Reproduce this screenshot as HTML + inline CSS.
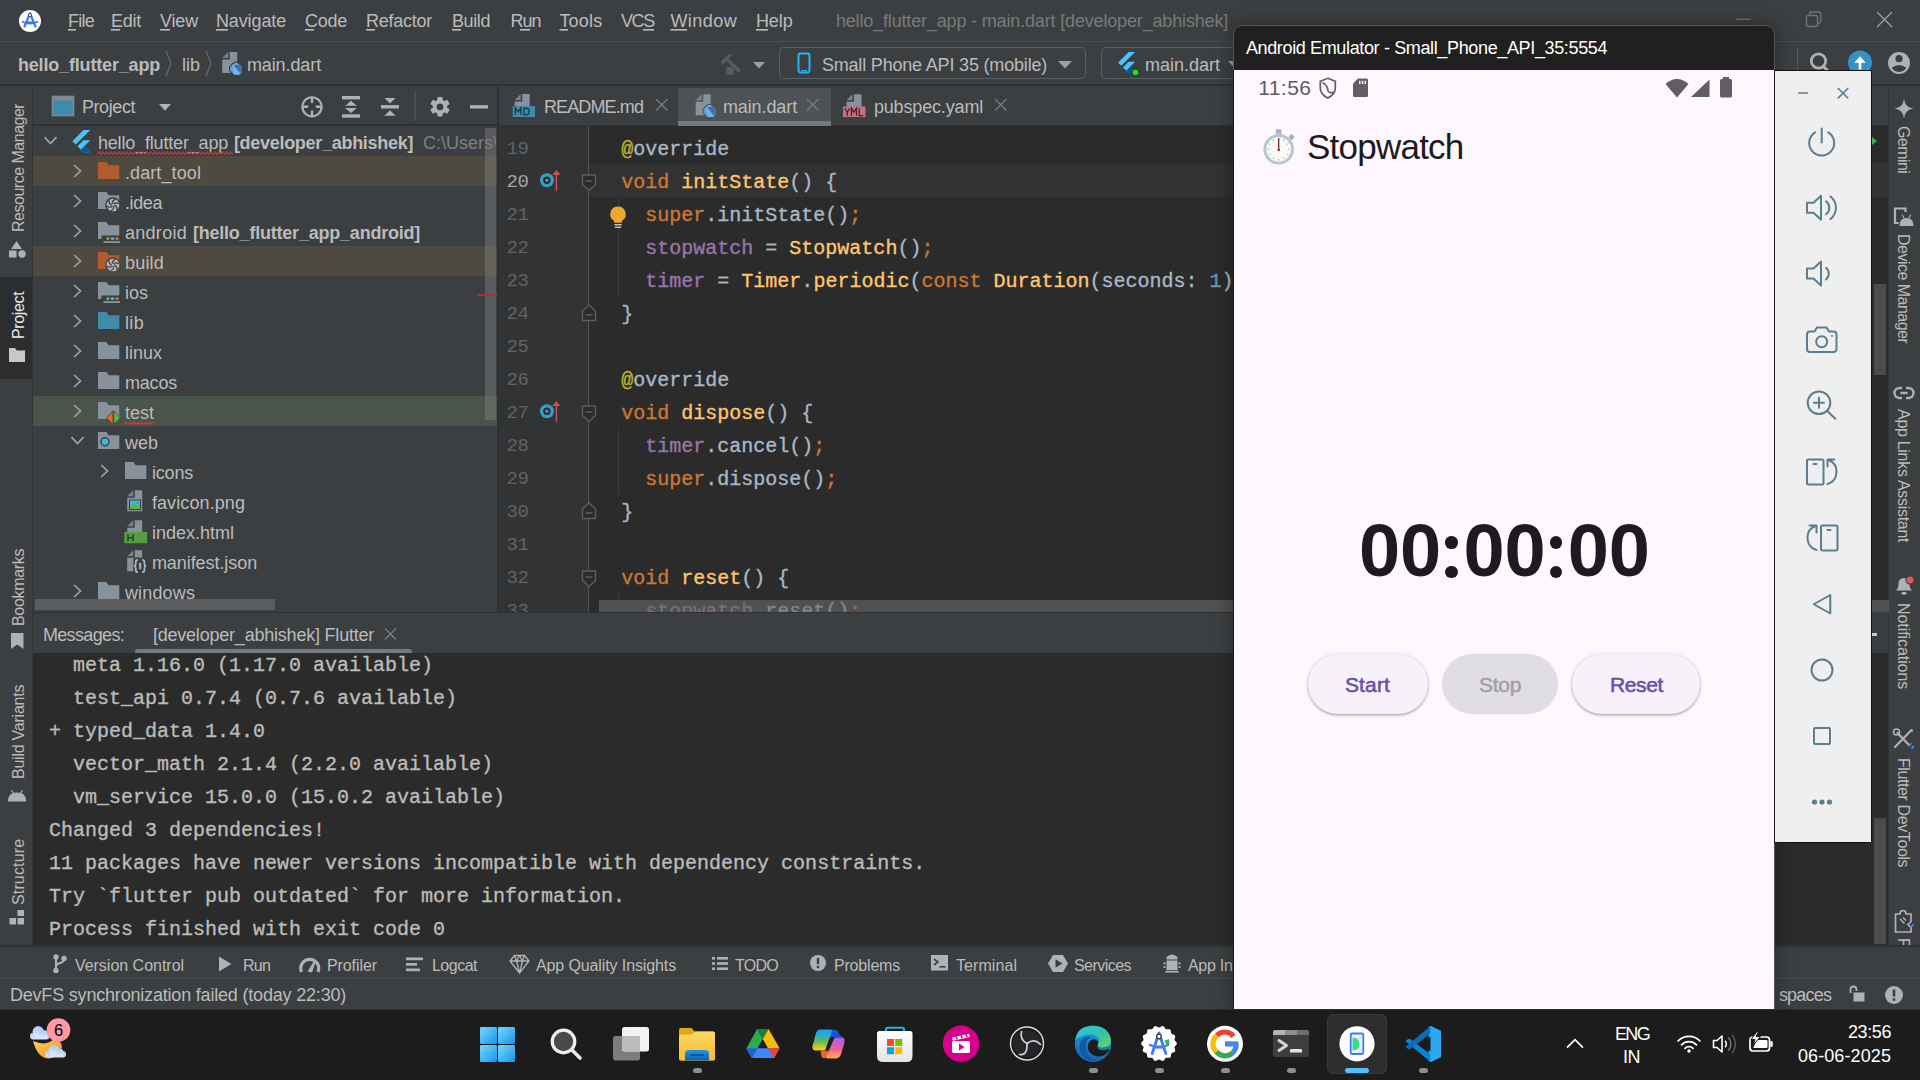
<!DOCTYPE html>
<html><head><meta charset="utf-8"><title>Android Studio</title><style>
html,body{margin:0;padding:0;background:#1c1c1c;}
body{width:1920px;height:1080px;position:relative;overflow:hidden;font-family:"Liberation Sans",sans-serif;}
.r{position:absolute;}
.t{position:absolute;white-space:pre;line-height:1;font-family:"Liberation Sans",sans-serif;}
.m{font-family:"Liberation Mono",monospace;}
.c{position:absolute;white-space:pre;line-height:1;font-family:"Liberation Mono",monospace;font-size:20px;-webkit-text-stroke:0.35px;}
svg{position:absolute;left:0;top:0;overflow:visible;}
</style></head><body>
<div class="r" style="left:0px;top:0px;width:1920px;height:1010px;background:#3c3f41;"></div>
<div class="r" style="left:0px;top:41px;width:1920px;height:1px;background:#4b4e50;"></div>
<div class="r" style="left:0px;top:84px;width:1920px;height:2px;background:#2f3133;"></div>
<div class="r" style="left:32px;top:86px;width:1px;height:859px;background:#323537;"></div>
<div class="r" style="left:0px;top:277px;width:32px;height:102px;background:#2b2d2e;"></div>
<div class="r" style="left:33px;top:124px;width:465px;height:2px;background:#2f3133;"></div>
<div class="r" style="left:33px;top:156px;width:464px;height:30px;background:#4e4a40;"></div>
<div class="r" style="left:33px;top:246px;width:464px;height:30px;background:#4e4a40;"></div>
<div class="r" style="left:33px;top:396px;width:464px;height:30px;background:#4a544a;"></div>
<div class="r" style="left:485px;top:128px;width:11px;height:292px;background:rgba(130,130,130,0.42);"></div>
<div class="r" style="left:477px;top:294px;width:20px;height:2px;background:#a83238;"></div>
<div class="r" style="left:35px;top:599px;width:240px;height:11px;background:#5b5d5f;"></div>
<div class="r" style="left:497px;top:86px;width:2px;height:527px;background:#2f3133;"></div>
<div class="r" style="left:33px;top:612px;width:1200px;height:1px;background:#2f3133;"></div>
<div class="r" style="left:499px;top:126px;width:1390px;height:486px;background:#2b2b2b;"></div>
<div class="r" style="left:499px;top:125px;width:1390px;height:1px;background:#323232;"></div>
<div class="r" style="left:678px;top:88px;width:153px;height:37px;background:#4e5254;"></div>
<div class="r" style="left:678px;top:121px;width:153px;height:5px;background:#747a80;"></div>
<div class="r" style="left:589px;top:164px;width:1299px;height:33px;background:#323232;"></div>
<div class="r" style="left:588px;top:126px;width:1px;height:486px;background:#555555;"></div>
<div class="r" style="left:33px;top:613px;width:1856px;height:40px;background:#3c3f41;"></div>
<div class="r" style="left:135px;top:649px;width:277px;height:5px;background:#747a80;border-radius:3px;"></div>
<div class="r" style="left:33px;top:653px;width:1856px;height:292px;background:#2b2b2b;"></div>
<div class="r" style="left:0px;top:945px;width:1920px;height:2px;background:#323232;"></div>
<div class="r" style="left:0px;top:978px;width:1920px;height:1px;background:#4b4e50;"></div>
<div class="r" style="left:1872px;top:163px;width:16px;height:33px;background:#323232;"></div>
<div class="r" style="left:1874px;top:284px;width:12px;height:91px;background:#4b4b4b;"></div>
<div class="r" style="left:1872px;top:613px;width:16px;height:39px;background:#3a3d3f;"></div>
<div class="r" style="left:1872px;top:633px;width:5px;height:3px;background:#c8c8c8;"></div>
<div class="r" style="left:1874px;top:818px;width:12px;height:126px;background:#4b4b4b;"></div>
<div class="r" style="left:1872px;top:137px;width:0;height:0;border-left:5px solid #3fae57;border-top:4px solid transparent;border-bottom:4px solid transparent"></div>
<div class="r" style="left:499px;top:126px;width:89px;height:486px;background:#313335;"></div>
<div class="r" style="left:1889px;top:86px;width:31px;height:859px;background:#3c3f41;"></div>
<div class="r" style="left:1888px;top:86px;width:1px;height:859px;background:#323537;"></div>
<div class="r" style="left:499px;top:126px;width:1390px;height:486px;overflow:hidden">
<span class="c" style="left:7.4px;top:14.44px;color:#606366;font-size:19px;letter-spacing:-0.3px;-webkit-text-stroke:0">19</span>
<span class="c" style="left:98.3px;top:13.77px"><span style="color:#a9b7c6">  </span><span style="color:#bbb529">@</span><span style="color:#a9b7c6">override</span></span>
<span class="c" style="left:7.4px;top:47.44px;color:#a4a3a3;font-size:19px;letter-spacing:-0.3px;-webkit-text-stroke:0">20</span>
<span class="c" style="left:98.3px;top:46.77px"><span style="color:#a9b7c6">  </span><span style="color:#cc7832">void</span><span style="color:#ffc66d"> initState</span><span style="color:#a9b7c6">() {</span></span>
<span class="c" style="left:7.4px;top:80.44px;color:#606366;font-size:19px;letter-spacing:-0.3px;-webkit-text-stroke:0">21</span>
<span class="c" style="left:98.3px;top:79.77px"><span style="color:#a9b7c6">    </span><span style="color:#cc7832">super</span><span style="color:#a9b7c6">.initState()</span><span style="color:#cc7832">;</span></span>
<span class="c" style="left:7.4px;top:113.44px;color:#606366;font-size:19px;letter-spacing:-0.3px;-webkit-text-stroke:0">22</span>
<span class="c" style="left:98.3px;top:112.77px"><span style="color:#a9b7c6">    </span><span style="color:#9876aa">stopwatch</span><span style="color:#a9b7c6"> = </span><span style="color:#ffc66d">Stopwatch</span><span style="color:#a9b7c6">()</span><span style="color:#cc7832">;</span></span>
<span class="c" style="left:7.4px;top:146.44px;color:#606366;font-size:19px;letter-spacing:-0.3px;-webkit-text-stroke:0">23</span>
<span class="c" style="left:98.3px;top:145.77px"><span style="color:#a9b7c6">    </span><span style="color:#9876aa">timer</span><span style="color:#a9b7c6"> = </span><span style="color:#ffc66d">Timer</span><span style="color:#a9b7c6">.</span><span style="color:#ffc66d">periodic</span><span style="color:#a9b7c6">(</span><span style="color:#cc7832">const</span><span style="color:#ffc66d"> Duration</span><span style="color:#a9b7c6">(seconds: </span><span style="color:#6897bb">1</span><span style="color:#a9b7c6">), (timer) {</span></span>
<span class="c" style="left:7.4px;top:179.44px;color:#606366;font-size:19px;letter-spacing:-0.3px;-webkit-text-stroke:0">24</span>
<span class="c" style="left:98.3px;top:178.77px"><span style="color:#a9b7c6">  </span><span style="color:#a9b7c6">}</span></span>
<span class="c" style="left:7.4px;top:212.44px;color:#606366;font-size:19px;letter-spacing:-0.3px;-webkit-text-stroke:0">25</span>
<span class="c" style="left:7.4px;top:245.44px;color:#606366;font-size:19px;letter-spacing:-0.3px;-webkit-text-stroke:0">26</span>
<span class="c" style="left:98.3px;top:244.77px"><span style="color:#a9b7c6">  </span><span style="color:#bbb529">@</span><span style="color:#a9b7c6">override</span></span>
<span class="c" style="left:7.4px;top:278.44px;color:#606366;font-size:19px;letter-spacing:-0.3px;-webkit-text-stroke:0">27</span>
<span class="c" style="left:98.3px;top:277.77px"><span style="color:#a9b7c6">  </span><span style="color:#cc7832">void</span><span style="color:#ffc66d"> dispose</span><span style="color:#a9b7c6">() {</span></span>
<span class="c" style="left:7.4px;top:311.44px;color:#606366;font-size:19px;letter-spacing:-0.3px;-webkit-text-stroke:0">28</span>
<span class="c" style="left:98.3px;top:310.77px"><span style="color:#a9b7c6">    </span><span style="color:#9876aa">timer</span><span style="color:#a9b7c6">.cancel()</span><span style="color:#cc7832">;</span></span>
<span class="c" style="left:7.4px;top:344.44px;color:#606366;font-size:19px;letter-spacing:-0.3px;-webkit-text-stroke:0">29</span>
<span class="c" style="left:98.3px;top:343.77px"><span style="color:#a9b7c6">    </span><span style="color:#cc7832">super</span><span style="color:#a9b7c6">.dispose()</span><span style="color:#cc7832">;</span></span>
<span class="c" style="left:7.4px;top:377.44px;color:#606366;font-size:19px;letter-spacing:-0.3px;-webkit-text-stroke:0">30</span>
<span class="c" style="left:98.3px;top:376.77px"><span style="color:#a9b7c6">  </span><span style="color:#a9b7c6">}</span></span>
<span class="c" style="left:7.4px;top:410.44px;color:#606366;font-size:19px;letter-spacing:-0.3px;-webkit-text-stroke:0">31</span>
<span class="c" style="left:7.4px;top:443.44px;color:#606366;font-size:19px;letter-spacing:-0.3px;-webkit-text-stroke:0">32</span>
<span class="c" style="left:98.3px;top:442.77px"><span style="color:#a9b7c6">  </span><span style="color:#cc7832">void</span><span style="color:#ffc66d"> reset</span><span style="color:#a9b7c6">() {</span></span>
<span class="c" style="left:7.4px;top:476.44px;color:#606366;font-size:19px;letter-spacing:-0.3px;-webkit-text-stroke:0">33</span>
<span class="c" style="left:98.3px;top:475.77px"><span style="color:#a9b7c6">    </span><span style="color:#9876aa">stopwatch</span><span style="color:#a9b7c6">.reset()</span><span style="color:#cc7832">;</span></span>
<div class="r" style="left:119px;top:71px;width:1px;height:99px;background:#3b3b3b;"></div>
<div class="r" style="left:119px;top:302px;width:1px;height:66px;background:#3b3b3b;"></div>
<div class="r" style="left:119px;top:467px;width:1px;height:20px;background:#3b3b3b;"></div>
<div class="r" style="left:100px;top:474px;width:1290px;height:12px;background:rgba(104,104,104,0.62);"></div>
</div>
<div class="r" style="left:33px;top:653px;width:1856px;height:292px;overflow:hidden">
<span class="c" style="left:16px;top:3.47px;color:#bbbbbb">  meta 1.16.0 (1.17.0 available)</span>
<span class="c" style="left:16px;top:36.47px;color:#bbbbbb">  test_api 0.7.4 (0.7.6 available)</span>
<span class="c" style="left:16px;top:69.47px;color:#bbbbbb">+ typed_data 1.4.0</span>
<span class="c" style="left:16px;top:102.47px;color:#bbbbbb">  vector_math 2.1.4 (2.2.0 available)</span>
<span class="c" style="left:16px;top:135.47px;color:#bbbbbb">  vm_service 15.0.0 (15.0.2 available)</span>
<span class="c" style="left:16px;top:168.47px;color:#bbbbbb">Changed 3 dependencies!</span>
<span class="c" style="left:16px;top:201.47px;color:#bbbbbb">11 packages have newer versions incompatible with dependency constraints.</span>
<span class="c" style="left:16px;top:234.47px;color:#bbbbbb">Try `flutter pub outdated` for more information.</span>
<span class="c" style="left:16px;top:267.47px;color:#bbbbbb">Process finished with exit code 0</span>
</div>
<span class="t" style="font-size:18px;color:#bbbbbb;letter-spacing:-0.704px;left:67.9px;top:11.76px;">File</span>
<span class="t" style="font-size:18px;color:#bbbbbb;letter-spacing:-0.208px;left:110.9px;top:11.76px;">Edit</span>
<span class="t" style="font-size:18px;color:#bbbbbb;letter-spacing:-0.126px;left:159.9px;top:11.76px;">View</span>
<span class="t" style="font-size:18px;color:#bbbbbb;letter-spacing:-0.106px;left:215.9px;top:11.76px;">Navigate</span>
<span class="t" style="font-size:18px;color:#bbbbbb;letter-spacing:-0.208px;left:304.9px;top:11.76px;">Code</span>
<span class="t" style="font-size:18px;color:#bbbbbb;letter-spacing:-0.229px;left:365.9px;top:11.76px;">Refactor</span>
<span class="t" style="font-size:18px;color:#bbbbbb;letter-spacing:-0.366px;left:451.9px;top:11.76px;">Build</span>
<span class="t" style="font-size:18px;color:#bbbbbb;letter-spacing:-0.944px;left:510.4px;top:11.76px;">Run</span>
<span class="t" style="font-size:18px;color:#bbbbbb;letter-spacing:0.234px;left:559.4px;top:11.76px;">Tools</span>
<span class="t" style="font-size:18px;color:#bbbbbb;letter-spacing:-1.272px;left:620.9px;top:11.76px;">VCS</span>
<span class="t" style="font-size:18px;color:#bbbbbb;letter-spacing:0.445px;left:670.4px;top:11.76px;">Window</span>
<span class="t" style="font-size:18px;color:#bbbbbb;letter-spacing:-0.083px;left:755.9px;top:11.76px;">Help</span>
<span class="t" style="font-size:18px;color:#787a7c;letter-spacing:-0.161px;left:835.9px;top:11.76px;">hello_flutter_app - main.dart [developer_abhishek]</span>
<span class="t" style="font-size:18px;color:#bbbbbb;font-weight:bold;letter-spacing:-0.167px;left:17.9px;top:55.76px;">hello_flutter_app</span>
<span class="t" style="font-size:18px;color:#bbbbbb;letter-spacing:0.061px;left:181.9px;top:55.76px;">lib</span>
<span class="t" style="font-size:18px;color:#bbbbbb;letter-spacing:-0.094px;left:246.9px;top:55.76px;">main.dart</span>
<span class="t" style="font-size:18px;color:#bbbbbb;letter-spacing:-0.182px;left:821.9px;top:55.76px;">Small Phone API 35 (mobile)</span>
<span class="t" style="font-size:18px;color:#bbbbbb;letter-spacing:0.017px;left:1144.9px;top:55.76px;">main.dart</span>
<span class="t" style="font-size:18px;color:#bbbbbb;letter-spacing:-0.404px;left:81.9px;top:97.76px;">Project</span>
<span class="t" style="font-size:18px;color:#bbbbbb;letter-spacing:-0.868px;left:543.9px;top:97.76px;">README.md</span>
<span class="t" style="font-size:18px;color:#bbbbbb;letter-spacing:-0.094px;left:722.9px;top:97.76px;">main.dart</span>
<span class="t" style="font-size:18px;color:#bbbbbb;letter-spacing:-0.155px;left:873.9px;top:97.76px;">pubspec.yaml</span>
<span class="t" style="font-size:18px;color:#bbbbbb;letter-spacing:-0.171px;left:97.9px;top:133.76px;">hello_flutter_app</span>
<span class="t" style="font-size:18px;color:#bbbbbb;letter-spacing:0.114px;left:124.9px;top:163.76px;">.dart_tool</span>
<span class="t" style="font-size:18px;color:#bbbbbb;letter-spacing:-0.369px;left:124.9px;top:193.76px;">.idea</span>
<span class="t" style="font-size:18px;color:#bbbbbb;letter-spacing:0.308px;left:124.9px;top:223.76px;">android</span>
<span class="t" style="font-size:18px;color:#bbbbbb;letter-spacing:0.234px;left:124.9px;top:253.76px;">build</span>
<span class="t" style="font-size:18px;color:#bbbbbb;letter-spacing:0.061px;left:124.9px;top:283.76px;">ios</span>
<span class="t" style="font-size:18px;color:#bbbbbb;letter-spacing:0.395px;left:124.9px;top:313.76px;">lib</span>
<span class="t" style="font-size:18px;color:#bbbbbb;letter-spacing:0.034px;left:124.9px;top:343.76px;">linux</span>
<span class="t" style="font-size:18px;color:#bbbbbb;letter-spacing:-0.163px;left:124.9px;top:373.76px;">macos</span>
<span class="t" style="font-size:18px;color:#bbbbbb;letter-spacing:0.046px;left:124.9px;top:403.76px;">test</span>
<span class="t" style="font-size:18px;color:#bbbbbb;letter-spacing:0.056px;left:124.9px;top:433.76px;">web</span>
<span class="t" style="font-size:18px;color:#bbbbbb;letter-spacing:-0.166px;left:151.9px;top:463.76px;">icons</span>
<span class="t" style="font-size:18px;color:#bbbbbb;letter-spacing:0.102px;left:151.9px;top:493.76px;">favicon.png</span>
<span class="t" style="font-size:18px;color:#bbbbbb;letter-spacing:0.015px;left:151.9px;top:523.76px;">index.html</span>
<span class="t" style="font-size:18px;color:#bbbbbb;letter-spacing:-0.066px;left:151.9px;top:553.76px;">manifest.json</span>
<div class="r" style="left:33px;top:576px;width:464px;height:23px;overflow:hidden"><span class="t" style="font-size:18px;color:#bbbbbb;letter-spacing:0.167px;left:91.9px;top:7.76px;">windows</span></div>
<span class="t" style="font-size:18px;color:#bbbbbb;font-weight:bold;letter-spacing:-0.293px;left:233.9px;top:133.76px;">[developer_abhishek]</span>
<div class="r" style="left:420px;top:128px;width:76px;height:28px;overflow:hidden"><span class="t" style="font-size:18px;color:#7d8082;left:3px;top:5.76px;">C:\Users\abhi</span></div>
<span class="t" style="font-size:18px;color:#bbbbbb;font-weight:bold;letter-spacing:-0.215px;left:192.9px;top:223.76px;">[hello_flutter_app_android]</span>
<span class="t" style="font-size:18px;color:#bbbbbb;letter-spacing:-0.65px;left:42.9px;top:625.76px;">Messages:</span>
<span class="t" style="font-size:18px;color:#bbbbbb;letter-spacing:-0.212px;left:152.9px;top:625.76px;">[developer_abhishek] Flutter</span>
<span class="t" style="font-size:16px;color:#bbbbbb;letter-spacing:-0.013px;left:74.9px;top:957.76px;">Version Control</span>
<span class="t" style="font-size:16px;color:#bbbbbb;letter-spacing:-0.72px;left:242.9px;top:957.76px;">Run</span>
<span class="t" style="font-size:16px;color:#bbbbbb;letter-spacing:-0.061px;left:326.9px;top:957.76px;">Profiler</span>
<span class="t" style="font-size:16px;color:#bbbbbb;letter-spacing:-0.474px;left:431.9px;top:957.76px;">Logcat</span>
<span class="t" style="font-size:16px;color:#bbbbbb;letter-spacing:-0.105px;left:535.9px;top:957.76px;">App Quality Insights</span>
<span class="t" style="font-size:16px;color:#bbbbbb;letter-spacing:-0.684px;left:734.9px;top:957.76px;">TODO</span>
<span class="t" style="font-size:16px;color:#bbbbbb;letter-spacing:-0.172px;left:833.9px;top:957.76px;">Problems</span>
<span class="t" style="font-size:16px;color:#bbbbbb;letter-spacing:0.091px;left:955.9px;top:957.76px;">Terminal</span>
<span class="t" style="font-size:16px;color:#bbbbbb;letter-spacing:-0.52px;left:1073.9px;top:957.76px;">Services</span>
<span class="t" style="font-size:16px;color:#bbbbbb;letter-spacing:-0.261px;left:1187.9px;top:957.76px;">App Inspection</span>
<span class="t" style="font-size:18px;color:#bbbbbb;letter-spacing:-0.19px;left:9.9px;top:985.76px;">DevFS synchronization failed (today 22:30)</span>
<span class="t" style="font-size:18px;color:#bbbbbb;letter-spacing:-0.808px;left:1778.9px;top:985.76px;">spaces</span>
<span class="t" style="font-size:16px;color:#bbbbbb;letter-spacing:-0.492px;left:11.46px;top:232.1px;transform-origin:0 0;transform:rotate(-90deg);">Resource Manager</span>
<span class="t" style="font-size:16px;color:#e8e8e8;letter-spacing:-0.371px;left:11.46px;top:339.1px;transform-origin:0 0;transform:rotate(-90deg);">Project</span>
<span class="t" style="font-size:16px;color:#bbbbbb;letter-spacing:-0.315px;left:11.46px;top:626.1px;transform-origin:0 0;transform:rotate(-90deg);">Bookmarks</span>
<span class="t" style="font-size:16px;color:#bbbbbb;letter-spacing:-0.238px;left:11.46px;top:779.1px;transform-origin:0 0;transform:rotate(-90deg);">Build Variants</span>
<span class="t" style="font-size:16px;color:#bbbbbb;letter-spacing:0.142px;left:11.46px;top:905.1px;transform-origin:0 0;transform:rotate(-90deg);">Structure</span>
<span class="t" style="font-size:16px;color:#bbbbbb;letter-spacing:-0.581px;left:1910.54px;top:125.9px;transform-origin:0 0;transform:rotate(90deg);">Gemini</span>
<span class="t" style="font-size:16px;color:#bbbbbb;letter-spacing:-0.521px;left:1910.54px;top:233.9px;transform-origin:0 0;transform:rotate(90deg);">Device Manager</span>
<span class="t" style="font-size:16px;color:#bbbbbb;letter-spacing:-0.292px;left:1910.54px;top:408.9px;transform-origin:0 0;transform:rotate(90deg);">App Links Assistant</span>
<span class="t" style="font-size:16px;color:#bbbbbb;letter-spacing:-0.074px;left:1910.54px;top:602.9px;transform-origin:0 0;transform:rotate(90deg);">Notifications</span>
<span class="t" style="font-size:16px;color:#bbbbbb;letter-spacing:-0.4px;left:1910.54px;top:757.9px;transform-origin:0 0;transform:rotate(90deg);">Flutter DevTools</span>
<div class="r" style="left:1889px;top:930px;width:31px;height:15px;overflow:hidden"><span class="t" style="font-size:16px;color:#bbbbbb;left:21.54px;top:8px;transform-origin:0 0;transform:rotate(90deg);">Flutter Outline</span></div>
<svg width="1920" height="1080" viewBox="0 0 1920 1080"><circle cx="30" cy="21" r="11" fill="#ffffff"/>
<path d="M30 13.5l-5.5 13M30 13.5l5.5 13M26 22.5h8" stroke="#3b78e7" stroke-width="2.2" fill="none" stroke-linecap="round"/><circle cx="30" cy="15" r="1.6" fill="#fff" stroke="#244a8a" stroke-width="1"/><path d="M22 21.5q8 4.5 16 0" stroke="#3b78e7" stroke-width="1.6" fill="none"/>
<rect x="68" y="29" width="8" height="1.6" fill="#bbbbbb"/>
<rect x="111" y="29" width="9" height="1.6" fill="#bbbbbb"/>
<rect x="160" y="29" width="10" height="1.6" fill="#bbbbbb"/>
<rect x="216" y="29" width="12" height="1.6" fill="#bbbbbb"/>
<rect x="305" y="29" width="9" height="1.6" fill="#bbbbbb"/>
<rect x="366" y="29" width="9" height="1.6" fill="#bbbbbb"/>
<rect x="452" y="29" width="9" height="1.6" fill="#bbbbbb"/>
<rect x="520" y="29" width="10" height="1.6" fill="#bbbbbb"/>
<rect x="559.5" y="29" width="8.5" height="1.6" fill="#bbbbbb"/>
<rect x="643" y="29" width="11" height="1.6" fill="#bbbbbb"/>
<rect x="670.5" y="29" width="16.5" height="1.6" fill="#bbbbbb"/>
<rect x="756" y="29" width="12" height="1.6" fill="#bbbbbb"/>
<path d="M166 51l5 12.5l-5 12.5" stroke="#6a6d6f" stroke-width="1.2" fill="none"/>
<path d="M206 51l5 12.5l-5 12.5" stroke="#6a6d6f" stroke-width="1.2" fill="none"/>
<g transform="translate(217.7 50.6) scale(1.5)"><path d="M8 1v5H3v9h10V1z" fill="#87929a"/><path d="M7 1L3 5h4z" fill="#87929a" opacity="0.8"/></g><polygon points="236.50,62.60 242.00,66.80 242.00,72.60 239.60,74.80 234.20,74.80 230.20,70.30 230.20,67.20 233.20,63.90" fill="#3c3f41" stroke="#3c3f41" stroke-width="2.400" stroke-linejoin="round"/><polygon points="236.50,62.60 242.00,66.80 242.00,72.60 239.60,74.80 234.20,74.80 230.20,70.30 230.20,67.20 233.20,63.90" fill="#6fb4f0"/><polygon points="233.30,64.80 239.20,64.80 242.00,67.00 242.00,72.60 240.50,73.70" fill="#4a6fa8"/><polygon points="230.20,67.20 232.00,65.30 234.50,74.80 234.20,74.80 230.20,70.30" fill="#5a8fd0" opacity="0.600"/>
<g fill="#5a5a5a"><rect x="726.300" y="67.200" width="7.700" height="7.600"/><path d="M720.300 62L728.300 54L733 54L729 58.500L741.300 70L738.300 73.300L726.700 61.200L723 64.800Z" stroke="#3c3f41" stroke-width="0.800"/></g>
<path d="M753 62h12l-6 6.5z" fill="#9da0a2"/>
<rect x="779.5" y="47.5" width="306" height="31" rx="4.5" fill="none" stroke="#5c5f61"/>
<rect x="798.5" y="53.5" width="11" height="19" rx="2.2" fill="none" stroke="#1eb4f5" stroke-width="2"/><rect x="801.5" y="70" width="5.5" height="1.3" fill="#1eb4f5"/>
<path d="M1058 61h14l-7 7.5z" fill="#9da0a2"/>
<rect x="1101.5" y="47.5" width="170" height="31" rx="4.5" fill="none" stroke="#5c5f61"/>
<path d="M1228 61h14l-7 7.500z" fill="#9da0a2"/>
<g transform="translate(1118 52) scale(0.95)"><path d="M11.2 0L0 11.2l3.4 3.4L18 0z" fill="#47c5fb"/><path d="M11.2 10.3L5.2 16.3l6 5.9H18l-6-5.9l6-6z" fill="#47c5fb"/><path d="M8.6 19.7l2.6 2.5H18l-6-5.9z" fill="#00569e"/></g>
<circle cx="1135.500" cy="72.300" r="3.800" fill="#2f3133"/><circle cx="1135.500" cy="72.300" r="2.900" fill="#1fe01f"/>
<rect x="1736" y="18.5" width="15" height="1.4" fill="#6d7072"/>
<rect x="1806.5" y="15.5" width="11" height="11" rx="2" fill="none" stroke="#74777a" stroke-width="1.3"/><path d="M1809.5 15v-1.2q0-1.8 1.8-1.8h7.2q2.2 0 2.2 2.2v7.2q0 1.8-1.8 1.8h-1" fill="none" stroke="#74777a" stroke-width="1.3"/>
<path d="M1877 12l15 15M1892 12l-15 15" stroke="#9c9ea0" stroke-width="1.250"/>
<rect x="1797" y="48" width="1" height="23" fill="#55585a"/>
<circle cx="1818.5" cy="61" r="7.2" fill="none" stroke="#afb1b3" stroke-width="2.8"/><path d="M1823.5 66.5l5.5 5.5" stroke="#afb1b3" stroke-width="3"/>
<circle cx="1860" cy="62.500" r="12" fill="#3592c4"/><path d="M1854.300 62.700l5.700-6.400l5.700 6.400z" fill="#fff"/><rect x="1858.700" y="62" width="2.600" height="7.500" fill="#fff"/>
<circle cx="1899" cy="63" r="11" fill="#afb1b3"/><circle cx="1899" cy="58.700" r="3.600" fill="#3c3f41"/><path d="M1891.800 67.700q7.200-5.600 14.400 0q-1.200 3.400-7.200 4.200q-6-0.800-7.200-4.200z" fill="#3c3f41"/>
<rect x="52.5" y="96.5" width="21" height="19" fill="#3e8bab" stroke="#7e8a91" stroke-width="1.6"/><rect x="52" y="96" width="22" height="4.5" fill="#7e8a91"/>
<path d="M159 104h12l-6 6.8z" fill="#afb1b3"/>
<circle cx="312" cy="106.8" r="9.6" fill="none" stroke="#afb1b3" stroke-width="2.1"/><path d="M312 97v6M312 110.600v6M302.200 106.800h6M315.800 106.800h6" stroke="#afb1b3" stroke-width="2.4"/>
<g fill="#afb1b3"><rect x="342" y="96" width="18" height="3.4"/><rect x="342" y="114.3" width="18" height="3.4"/><path d="M351 100.800l5.800 5h-11.600z"/><path d="M351 113l5.800-5h-11.600z"/></g>
<g fill="#afb1b3"><rect x="381" y="105.100" width="18" height="3.400"/><path d="M390 103.400l5.600-5.400h-11.200z"/><path d="M390 110.300l5.600 5.400h-11.200z"/></g>
<rect x="414.5" y="91" width="1.2" height="30" fill="#55585a"/>
<g transform="translate(440 106.8)" fill="#afb1b3"><rect x="-2.6" y="-9.8" width="5.2" height="5" rx="0.8" transform="rotate(0)"/><rect x="-2.6" y="-9.8" width="5.2" height="5" rx="0.8" transform="rotate(60)"/><rect x="-2.6" y="-9.8" width="5.2" height="5" rx="0.8" transform="rotate(120)"/><rect x="-2.6" y="-9.8" width="5.2" height="5" rx="0.8" transform="rotate(180)"/><rect x="-2.6" y="-9.8" width="5.2" height="5" rx="0.8" transform="rotate(240)"/><rect x="-2.6" y="-9.8" width="5.2" height="5" rx="0.8" transform="rotate(300)"/><circle r="7.2"/></g><circle cx="440" cy="106.800" r="3.400" fill="#3c3f41"/>
<rect x="470" y="105.200" width="18" height="3.300" fill="#afb1b3"/>
<path d="M44.5 137.1l6 6.4l6-6.4" fill="none" stroke="#a0a2a4" stroke-width="1.7"/>
<g transform="translate(72.3 130) scale(1.0)"><path d="M11.2 0L0 11.2l3.4 3.4L18 0z" fill="#47c5fb"/><path d="M11.2 10.3L5.2 16.3l6 5.9H18l-6-5.9l6-6z" fill="#47c5fb"/><path d="M8.6 19.7l2.6 2.5H18l-6-5.9z" fill="#00569e"/></g>
<path d="M97 154.3L99 151.9L101 154.3L103 151.9L105 154.3L107 151.9L109 154.3L111 151.9L113 154.3L115 151.9L117 154.3L119 151.9L121 154.3L123 151.9L125 154.3L127 151.9L129 154.3L131 151.9L133 154.3L135 151.9L137 154.3L139 151.9L141 154.3L143 151.9L145 154.3L147 151.9L149 154.3L151 151.9L153 154.3L155 151.9L157 154.3L159 151.9L161 154.3L163 151.9L165 154.3L167 151.9L169 154.3L171 151.9L173 154.3L175 151.9L177 154.3L179 151.9L181 154.3L183 151.9L185 154.3L187 151.9L189 154.3L191 151.9L193 154.3L195 151.9L197 154.3L199 151.9L201 154.3L203 151.9L205 154.3L207 151.9L209 154.3L211 151.9L213 154.3L215 151.9L217 154.3L219 151.9L221 154.3L223 151.9L225 154.3L227 151.9L229 154.3L231 151.9L233 154.3" fill="none" stroke="#bc3f3c" stroke-width="1.3"/>
<path d="M74.1 165l6.4 6l-6.4 6" fill="none" stroke="#a0a2a4" stroke-width="1.7"/>
<path d="M74.1 195l6.4 6l-6.4 6" fill="none" stroke="#a0a2a4" stroke-width="1.7"/>
<path d="M74.1 225l6.4 6l-6.4 6" fill="none" stroke="#a0a2a4" stroke-width="1.7"/>
<path d="M74.1 255l6.4 6l-6.4 6" fill="none" stroke="#a0a2a4" stroke-width="1.7"/>
<path d="M74.1 285l6.4 6l-6.4 6" fill="none" stroke="#a0a2a4" stroke-width="1.7"/>
<path d="M74.1 315l6.4 6l-6.4 6" fill="none" stroke="#a0a2a4" stroke-width="1.7"/>
<path d="M74.1 345l6.4 6l-6.4 6" fill="none" stroke="#a0a2a4" stroke-width="1.7"/>
<path d="M74.1 375l6.4 6l-6.4 6" fill="none" stroke="#a0a2a4" stroke-width="1.7"/>
<path d="M74.1 405l6.4 6l-6.4 6" fill="none" stroke="#a0a2a4" stroke-width="1.7"/>
<path d="M74.1 585l6.4 6l-6.4 6" fill="none" stroke="#a0a2a4" stroke-width="1.7"/>
<path d="M71.5 437.1l6 6.4l6-6.4" fill="none" stroke="#a0a2a4" stroke-width="1.7"/>
<path d="M101.1 465l6.4 6l-6.4 6" fill="none" stroke="#a0a2a4" stroke-width="1.7"/>
<g transform="translate(96.5 159) scale(1.5)"><path d="M1 2h5.6l1.5 2.2H15.2V13.4H1z" fill="#b05c2c"/></g>
<g transform="translate(96.5 189) scale(1.5)"><path d="M1 2h5.6l1.5 2.2H15.2V13.4H1z" fill="#87929a"/></g>
<circle cx="113" cy="205" r="7.8" fill="#3c3f41"/><circle cx="113" cy="205" r="6.3" fill="#b4b7b9"/><path d="M114.20 205.00Q117.15 205.63 116.98 210.01" stroke="#3c3f41" stroke-width="1.3" fill="none"/><path d="M113.60 206.04Q114.53 208.91 110.65 210.95" stroke="#3c3f41" stroke-width="1.3" fill="none"/><path d="M112.40 206.04Q110.38 208.28 106.67 205.94" stroke="#3c3f41" stroke-width="1.3" fill="none"/><path d="M111.80 205.00Q108.85 204.37 109.02 199.99" stroke="#3c3f41" stroke-width="1.3" fill="none"/><path d="M112.40 203.96Q111.47 201.09 115.35 199.05" stroke="#3c3f41" stroke-width="1.3" fill="none"/><path d="M113.60 203.96Q115.62 201.72 119.33 204.06" stroke="#3c3f41" stroke-width="1.3" fill="none"/>
<g transform="translate(96.5 219) scale(1.5)"><path d="M1 2h5.6l1.5 2.2H15.2V13.4H1z" fill="#87929a"/></g><rect x="101.500" y="235.5" width="20" height="8" fill="#3c3f41"/><circle cx="108" cy="238.6" r="1.7" fill="#62b543"/><circle cx="112.500" cy="238.6" r="1.7" fill="#40b6e0"/><circle cx="117" cy="238.6" r="1.7" fill="#f26522"/><rect x="103.500" y="241.3" width="16.500" height="1.500" fill="#9aa7b0"/>
<g transform="translate(96.5 249) scale(1.5)"><path d="M1 2h5.6l1.5 2.2H15.2V13.4H1z" fill="#b05c2c"/></g>
<circle cx="113" cy="265" r="7.8" fill="#4e4a40"/><circle cx="113" cy="265" r="6.3" fill="#b4b7b9"/><path d="M114.20 265.00Q117.15 265.63 116.98 270.01" stroke="#4e4a40" stroke-width="1.3" fill="none"/><path d="M113.60 266.04Q114.53 268.91 110.65 270.95" stroke="#4e4a40" stroke-width="1.3" fill="none"/><path d="M112.40 266.04Q110.38 268.28 106.67 265.94" stroke="#4e4a40" stroke-width="1.3" fill="none"/><path d="M111.80 265.00Q108.85 264.37 109.02 259.99" stroke="#4e4a40" stroke-width="1.3" fill="none"/><path d="M112.40 263.96Q111.47 261.09 115.35 259.05" stroke="#4e4a40" stroke-width="1.3" fill="none"/><path d="M113.60 263.96Q115.62 261.72 119.33 264.06" stroke="#4e4a40" stroke-width="1.3" fill="none"/>
<g transform="translate(96.5 279) scale(1.5)"><path d="M1 2h5.6l1.5 2.2H15.2V13.4H1z" fill="#87929a"/></g><rect x="101.500" y="295.5" width="20" height="8" fill="#3c3f41"/><circle cx="108" cy="298.6" r="1.7" fill="#62b543"/><circle cx="112.500" cy="298.6" r="1.7" fill="#40b6e0"/><circle cx="117" cy="298.6" r="1.7" fill="#f26522"/><rect x="103.500" y="301.3" width="16.500" height="1.500" fill="#9aa7b0"/>
<g transform="translate(96.5 309) scale(1.5)"><path d="M1 2h5.6l1.5 2.2H15.2V13.4H1z" fill="#3e8bab"/></g>
<g transform="translate(96.5 339) scale(1.5)"><path d="M1 2h5.6l1.5 2.2H15.2V13.4H1z" fill="#87929a"/></g>
<g transform="translate(96.5 369) scale(1.5)"><path d="M1 2h5.6l1.5 2.2H15.2V13.4H1z" fill="#87929a"/></g>
<g transform="translate(96.5 399) scale(1.5)"><path d="M1 2h5.6l1.5 2.2H15.2V13.4H1z" fill="#87929a"/></g>
<path d="M113.300 410.3l7.400 7.400l-7.400 7.400l-7.400-7.400z" fill="#4a544a"/><path d="M112.500 412.2v11l-5.500-5.500z" fill="#f26522"/><path d="M114.300 412.2v11l5.500-5.500z" fill="#62b543"/>
<path d="M124 424.5L126 422.1L128 424.5L130 422.1L132 424.5L134 422.1L136 424.5L138 422.1L140 424.5L142 422.1L144 424.5L146 422.1L148 424.5L150 422.1L152 424.5L154 422.1" fill="none" stroke="#bc3f3c" stroke-width="1.3"/>
<g transform="translate(96.5 429) scale(1.5)"><path d="M1 2h5.6l1.5 2.2H15.2V13.4H1z" fill="#87929a"/></g>
<circle cx="105" cy="441.8" r="4.700" fill="#3c3f41"/><circle cx="105" cy="441.8" r="3.300" fill="#40b6e0"/>
<g transform="translate(123.5 459) scale(1.5)"><path d="M1 2h5.6l1.5 2.2H15.2V13.4H1z" fill="#87929a"/></g>
<g transform="translate(122.7 488.7) scale(1.5)"><path d="M8 1v5H3v9h10V1z" fill="#87929a"/><path d="M7 1L3 5h4z" fill="#87929a" opacity="0.8"/></g>
<rect x="129" y="499.5" width="12" height="10.500" fill="#3c3f41"/><rect x="130" y="500.5" width="10" height="8.500" fill="#40b6e0"/><path d="M130 509v-3.200q2.500-2.800 5-1.500q2.500 1.700 5 2.500v2.200z" fill="#62b543"/><circle cx="137.500" cy="502.8" r="0.900" fill="#2f7f9f"/>
<g transform="translate(122.7 518.7) scale(1.5)"><path d="M8 1v5H3v4.199999999999999h10V1z" fill="#87929a"/><path d="M7 1L3 5h4z" fill="#87929a" opacity="0.8"/></g>
<rect x="124.200" y="532" width="23" height="11.200" fill="#579a44"/><path d="M128 534.3v7M133 534.3v7M128 537.8h5" stroke="#254a1c" stroke-width="1.600" fill="none"/>
<g transform="translate(122.7 548.7) scale(1.5)"><path d="M8 1v5H3v9h10V1z" fill="#87929a"/><path d="M7 1L3 5h4z" fill="#87929a" opacity="0.8"/></g>
<path d="M133.500 557.5h9.500v14.500h-9.500z" fill="#3c3f41"/>
<g fill="none" stroke="#3c3f41" stroke-width="4.200"><path d="M138 559.8q-2.200 0-2.200 2v2.300q0 1.700-1.800 1.900q1.800 0.200 1.800 1.900v2.300q0 2 2.200 2"/><path d="M142.200 559.8q2.200 0 2.200 2v2.300q0 1.700 1.800 1.900q-1.800 0.200-1.800 1.900v2.300q0 2-2.200 2"/></g>
<g fill="none" stroke="#aeb9c0" stroke-width="1.700"><path d="M138 559.8q-2.200 0-2.200 2v2.300q0 1.700-1.800 1.900q1.800 0.200 1.800 1.900v2.300q0 2 2.200 2"/><path d="M142.200 559.8q2.200 0 2.200 2v2.300q0 1.700 1.800 1.900q-1.800 0.200-1.800 1.900v2.300q0 2-2.200 2"/><path d="M140.100 562.8v6.400" stroke-width="2.400" stroke="#9aa7b0"/></g>
<g clip-path="url(#cw)"><g transform="translate(96.5 579) scale(1.5)"><path d="M1 2h5.6l1.5 2.2H15.2V13.4H1z" fill="#87929a"/></g></g><clipPath id="cw"><rect x="33" y="570" width="464" height="29"/></clipPath>
<g transform="translate(510.2 92.5) scale(1.5)"><path d="M8 1v5H3v3.5999999999999996h10V1z" fill="#87929a"/><path d="M7 1L3 5h4z" fill="#87929a" opacity="0.8"/></g>
<rect x="512.700" y="106" width="22.300" height="11" fill="#3e8bab"/>
<path d="M515.300 115v-7l2.800 3.800l2.800-3.800v7" fill="none" stroke="#1d3d4a" stroke-width="1.400"/><path d="M524 108.200v6.600h2q3.200 0 3.200-3.300t-3.200-3.300z" fill="none" stroke="#1d3d4a" stroke-width="1.400"/>
<g transform="translate(691.2 92.8) scale(1.5)"><path d="M8 1v5H3v9h10V1z" fill="#87929a"/><path d="M7 1L3 5h4z" fill="#87929a" opacity="0.8"/></g><polygon points="710.00,104.80 715.50,109.00 715.50,114.80 713.10,117.00 707.70,117.00 703.70,112.50 703.70,109.40 706.70,106.10" fill="#4e5254" stroke="#4e5254" stroke-width="2.400" stroke-linejoin="round"/><polygon points="710.00,104.80 715.50,109.00 715.50,114.80 713.10,117.00 707.70,117.00 703.70,112.50 703.70,109.40 706.70,106.10" fill="#6fb4f0"/><polygon points="706.80,107.00 712.70,107.00 715.50,109.20 715.50,114.80 714.00,115.90" fill="#4a6fa8"/><polygon points="703.70,109.40 705.50,107.50 708.00,117.00 707.70,117.00 703.70,112.50" fill="#5a8fd0" opacity="0.600"/>
<g transform="translate(842 92.8) scale(1.5)"><path d="M8 1v5H3v3.5999999999999996h10V1z" fill="#87929a"/><path d="M7 1L3 5h4z" fill="#87929a" opacity="0.8"/></g>
<rect x="843" y="106.500" width="22.500" height="10.500" fill="#c3717c"/>
<path d="M844.800 108.300l2.500 3.700l2.500-3.700M847.300 112v3.700M851.500 115.700v-7.400l2.500 3.800l2.500-3.800v7.400M859.300 108.300v7.400h4" fill="none" stroke="#4a1f27" stroke-width="1.250"/>
<path d="M656 99l11.500 11.500M667.5 99l-11.500 11.500" stroke="#7b7e80" stroke-width="1.300"/>
<path d="M807 99l11.500 11.500M818.5 99l-11.500 11.500" stroke="#7b7e80" stroke-width="1.300"/>
<path d="M995 99l11.500 11.500M1006.5 99l-11.500 11.500" stroke="#7b7e80" stroke-width="1.300"/>
<path d="M385 628.500l11 11M396 628.500l-11 11" stroke="#7b7e80" stroke-width="1.300"/>
<circle cx="546.900" cy="180.3" r="7" fill="#3a9cc4"/><circle cx="546.900" cy="180.3" r="3.700" fill="#2b2b2b"/><circle cx="546.900" cy="180.3" r="1.700" fill="#3a9cc4"/><path d="M556.400 190.8v-18" stroke="#c75450" stroke-width="1.500"/><path d="M552.300 175.10000000000002l4.100-5l4.100 5z" fill="#c75450"/>
<circle cx="546.900" cy="411.3" r="7" fill="#3a9cc4"/><circle cx="546.900" cy="411.3" r="3.700" fill="#2b2b2b"/><circle cx="546.900" cy="411.3" r="1.700" fill="#3a9cc4"/><path d="M556.400 421.8v-18" stroke="#c75450" stroke-width="1.500"/><path d="M552.300 406.1l4.100-5l4.100 5z" fill="#c75450"/>
<path d="M582.500 175.0h13v9.500l-6.500 6l-6.500-6z" fill="#2b2b2b" stroke="#5d5d5d" stroke-width="1.400"/><rect x="585.500" y="180.3" width="7" height="1.500" fill="#5d5d5d"/>
<path d="M582.500 320.5h13v-9.500l-6.500-6l-6.500 6z" fill="#2b2b2b" stroke="#5d5d5d" stroke-width="1.400"/><rect x="585.500" y="314.2" width="7" height="1.500" fill="#5d5d5d"/>
<path d="M582.500 406.0h13v9.500l-6.500 6l-6.500-6z" fill="#2b2b2b" stroke="#5d5d5d" stroke-width="1.400"/><rect x="585.500" y="411.3" width="7" height="1.500" fill="#5d5d5d"/>
<path d="M582.500 518.5h13v-9.500l-6.500-6l-6.500 6z" fill="#2b2b2b" stroke="#5d5d5d" stroke-width="1.400"/><rect x="585.500" y="512.2" width="7" height="1.500" fill="#5d5d5d"/>
<path d="M582.500 571.0h13v9.500l-6.500 6l-6.500-6z" fill="#2b2b2b" stroke="#5d5d5d" stroke-width="1.400"/><rect x="585.500" y="576.3" width="7" height="1.500" fill="#5d5d5d"/>
<path d="M618 206.400a7.700 7.700 0 0 1 4.600 13.900q-0.800 0.900-0.800 2.400h-7.600q0-1.500-0.800-2.400a7.700 7.700 0 0 1 4.600-13.900z" fill="#f0a732"/><rect x="614.300" y="224" width="7.400" height="1.400" fill="#c4c4c4"/><rect x="614.800" y="226.600" width="6.400" height="1.400" fill="#c4c4c4"/>
<g fill="none" stroke="#afb1b3" stroke-width="2.200"><path d="M56 957v12.500M56 967q0-3 4-4q4-1 4-5"/></g><circle cx="56" cy="957" r="2.700" fill="#afb1b3"/><circle cx="56" cy="970.500" r="2.700" fill="#afb1b3"/><circle cx="64" cy="958.500" r="2.700" fill="#afb1b3"/>
<path d="M219 956.500l12.500 7.500l-12.500 7.500z" fill="#afb1b3"/>
<path d="M301.500 972a9 9 0 1 1 16.500 0" fill="none" stroke="#afb1b3" stroke-width="3.200"/><path d="M307.500 971.500l6.500-10.500l1.500 1l-3.500 10.500z" fill="#afb1b3"/>
<g fill="#afb1b3"><rect x="406" y="957.500" width="17" height="2.700"/><rect x="406" y="963" width="11" height="2.700"/><rect x="406" y="968.500" width="14" height="2.700"/></g>
<path d="M514.500 955.500h10l4.500 5.500l-9.500 12l-9.500-12zM510 961h19M514.500 955.500l2 5.500l3 12l3-12l2-5.500M516.500 961l3-5.500l3 5.500" fill="none" stroke="#afb1b3" stroke-width="1.300" stroke-linejoin="round"/>
<g fill="#afb1b3"><rect x="712" y="957" width="3" height="2.600"/><rect x="717" y="957" width="11" height="2.600"/><rect x="712" y="962.200" width="3" height="2.600"/><rect x="717" y="962.200" width="11" height="2.600"/><rect x="712" y="967.400" width="3" height="2.600"/><rect x="717" y="967.400" width="11" height="2.600"/></g>
<circle cx="818" cy="963" r="8" fill="#afb1b3"/><rect x="816.800" y="958" width="2.400" height="6.300" fill="#3c3f41"/><rect x="816.800" y="965.800" width="2.400" height="2.400" fill="#3c3f41"/>
<rect x="931" y="955" width="17" height="15.500" fill="#afb1b3"/><path d="M934 959l4 3l-4 3" stroke="#3c3f41" stroke-width="1.600" fill="none"/><rect x="939.500" y="966" width="6" height="1.600" fill="#3c3f41"/>
<path d="M1053 955h10l5 8.500l-5 8.500h-10l-5-8.500z" fill="#afb1b3"/><path d="M1055.500 959.300l7 4.200l-7 4.200z" fill="#3c3f41"/>
<g fill="#afb1b3"><path d="M1166.500 957q5.500-5 11 0v2.500h-11z"/><rect x="1166.500" y="960.500" width="11" height="9.500"/><rect x="1163.500" y="962.500" width="2" height="1.800"/><rect x="1178.500" y="962.500" width="2" height="1.800"/><rect x="1163.500" y="966.200" width="2" height="1.800"/><rect x="1178.500" y="966.200" width="2" height="1.800"/><rect x="1165.500" y="970.800" width="13" height="1.800"/></g>
<rect x="1853.500" y="992.500" width="11" height="9" fill="#afb1b3"/><path d="M1850.500 993v-3.500q0-3 3-3q3 0 3 3v1.500" fill="none" stroke="#afb1b3" stroke-width="1.800"/>
<circle cx="1894" cy="995" r="9" fill="#afb1b3"/><rect x="1892.700" y="989.500" width="2.600" height="7" fill="#3c3f41"/><rect x="1892.700" y="998.200" width="2.600" height="2.600" fill="#3c3f41"/>
<g fill="#afb1b3"><path d="M16.500 241l5.500 8h-11z"/><rect x="9" y="250.500" width="7.500" height="7"/><circle cx="22" cy="254" r="3.700"/></g>
<path d="M9 348h6l1.800 2.500h8.200v11.500h-16z" fill="#c8c8c8"/>
<path d="M11 633h12.500v16l-6.250-4.500l-6.250 4.500z" fill="#afb1b3"/>
<path d="M8.500 801q0-8 8.500-8q8.500 0 8.500 8zM11.500 790l2.500 4M22.500 790l-2.500 4" fill="#afb1b3" stroke="#afb1b3" stroke-width="1.200"/>
<g fill="#afb1b3"><rect x="17.500" y="910" width="6.500" height="6"/><rect x="9.500" y="918" width="6.500" height="6.500"/><rect x="17.500" y="918" width="6.500" height="6.500"/></g>
<path d="M1904 99q1 8.500 9.500 9.600q-8.500 1-9.500 9.600q-1-8.500-9.500-9.600q8.500-1 9.500-9.600z" fill="#afb1b3"/>
<path d="M1905.500 212v-3.500h-10.500v14.500h3.500" fill="none" stroke="#afb1b3" stroke-width="2.200"/><path d="M1900 225.500q0-7 6.500-7q6.500 0 6.500 7zM1902 214.500l2 3.500M1911 214.500l-2 3.500" fill="#afb1b3" stroke="#afb1b3" stroke-width="1.100"/>
<g fill="none" stroke="#afb1b3" stroke-width="2.400"><path d="M1902 388h-2.500a5 5 0 0 0 0 10h2.500"/><path d="M1906 388h2.500a5 5 0 0 1 0 10h-2.500"/><path d="M1900.500 393h7"/></g>
<path d="M1896 590.500q2.500-2 2.500-6.500q0-6 5.500-6q5.500 0 5.500 6q0 4.500 2.500 6.500z" fill="#afb1b3"/><rect x="1901.500" y="592" width="5" height="2.500" rx="1.200" fill="#afb1b3"/><circle cx="1910" cy="580" r="4.600" fill="#3c3f41"/><circle cx="1910" cy="580" r="3.500" fill="#db5860"/>
<g stroke="#afb1b3" fill="none" stroke-width="2.200" stroke-linecap="round"><path d="M1895 747l15-15.500"/><path d="M1897.500 733l11 11.500"/></g><circle cx="1896.500" cy="732" r="3" fill="none" stroke="#afb1b3" stroke-width="1.600"/><path d="M1908.500 746.500l3-3.200M1911.500 748.800l2.500-2.700" stroke="#4a8ff0" stroke-width="1.600"/><circle cx="1911.500" cy="730.500" r="1.500" fill="#afb1b3"/>
<path d="M1895.500 925.500v-11.500h4.500q0-3.500 3-3.500q3 0 3 3.500h5v7.500l-3 3l3 3v4.500h-15.500z" fill="none" stroke="#afb1b3" stroke-width="1.700"/><path d="M1900 919l4.500 4.500M1903 917.500l3 3" stroke="#afb1b3" stroke-width="1.500"/><path d="M1910.500 927.500l3-3.200" stroke="#4a8ff0" stroke-width="1.600"/></svg>
<div class="r" style="left:1232.6px;top:24.6px;width:542.8px;height:985px;border-radius:9.5px 9.5px 0 0;box-shadow:0 0 16px 3px rgba(0,0,0,0.27);background:#565656"></div>
<div class="r" style="left:1234px;top:26px;width:540px;height:46px;border-radius:8px 8px 0 0;background:#202020"></div>
<span class="t" style="font-size:18px;color:#ffffff;letter-spacing:-0.358px;left:1245.9px;top:38.76px;">Android Emulator - Small_Phone_API_35:5554</span>
<div class="r" style="left:1234px;top:70px;width:540px;height:938.5px;background:#fef7ff;"></div>
<div class="r" style="left:1233px;top:70px;width:1px;height:939px;background:#1a1a1a;"></div>
<div class="r" style="left:1233px;top:1008.5px;width:542px;height:1px;background:#1a1a1a;"></div>
<span class="t" style="font-size:21px;color:#5d5b60;letter-spacing:0.44px;left:1258.2px;top:76.72px;">11:56</span>
<span class="t" style="font-size:35px;color:#1d1b20;letter-spacing:-0.749px;left:1306.9px;top:128.57px;">Stopwatch</span>
<span class="t" style="font-size:74px;color:#1d1b20;font-weight:bold;letter-spacing:-0.056px;left:1358.9px;top:513.96px;">00</span>
<span class="t" style="font-size:74px;color:#1d1b20;font-weight:bold;letter-spacing:-0.056px;left:1463.5px;top:513.96px;">00</span>
<span class="t" style="font-size:74px;color:#1d1b20;font-weight:bold;letter-spacing:-0.056px;left:1567.7px;top:513.96px;">00</span>
<div class="r" style="left:1445.4px;top:536.2px;width:12.6px;height:12.6px;background:#1d1b20;border-radius:50%;"></div>
<div class="r" style="left:1445.4px;top:565.8000000000001px;width:12.6px;height:12.6px;background:#1d1b20;border-radius:50%;"></div>
<div class="r" style="left:1549.5px;top:536.2px;width:12.6px;height:12.6px;background:#1d1b20;border-radius:50%;"></div>
<div class="r" style="left:1549.5px;top:565.8000000000001px;width:12.6px;height:12.6px;background:#1d1b20;border-radius:50%;"></div>
<div class="r" style="left:1308px;top:654px;width:120px;height:60px;background:#f7f2fa;border-radius:30px;box-shadow:0 1px 3px 1px rgba(0,0,0,0.13),0 1px 2px rgba(0,0,0,0.24);"></div>
<div class="r" style="left:1442px;top:654px;width:116px;height:60px;background:#e1dde4;border-radius:30px;"></div>
<div class="r" style="left:1572px;top:654px;width:128px;height:60px;background:#f7f2fa;border-radius:30px;box-shadow:0 1px 3px 1px rgba(0,0,0,0.13),0 1px 2px rgba(0,0,0,0.24);"></div>
<span class="t" style="font-size:21px;color:#6750a4;letter-spacing:0.168px;left:1344.9px;top:674.22px;-webkit-text-stroke:0.55px #6750a4;">Start</span>
<span class="t" style="font-size:21px;color:#a29fa6;letter-spacing:-0.251px;left:1478.9px;top:674.22px;-webkit-text-stroke:0.55px #a29fa6;">Stop</span>
<span class="t" style="font-size:21px;color:#6750a4;letter-spacing:-0.332px;left:1609.9px;top:674.22px;-webkit-text-stroke:0.55px #6750a4;">Reset</span>
<div class="r" style="left:1774px;top:70px;width:98px;height:773px;background:#141414;"></div>
<div class="r" style="left:1775px;top:71px;width:96px;height:771px;background:#efefef;"></div>
<svg width="1920" height="1080" viewBox="0 0 1920 1080"><path d="M1798 93h10" stroke="#5b7e8e" stroke-width="1.500"/>
<path d="M1837.800 88l10.400 10.400M1848.200 88l-10.400 10.400" stroke="#5b7e8e" stroke-width="1.600"/>
<path d="M1815.200 132.300a12.500 12.500 0 1 0 13 0M1821.700 128.500v14" fill="none" stroke="#5b7e8e" stroke-width="2" stroke-linecap="round" stroke-linejoin="round"/>
<path d="M1807 202.8h6.500l7.500-7v24l-7.500-7h-6.500z" fill="none" stroke="#5b7e8e" stroke-width="2" stroke-linecap="round" stroke-linejoin="round"/>
<path d="M1826 201.300a8 8 0 0 1 0 13M1830.500 196.500a14.500 14.500 0 0 1 0 22.600" fill="none" stroke="#5b7e8e" stroke-width="2" stroke-linecap="round" stroke-linejoin="round"/>
<path d="M1807 268.6h6.500l7.500-7v24l-7.500-7h-6.500z" fill="none" stroke="#5b7e8e" stroke-width="2" stroke-linecap="round" stroke-linejoin="round"/>
<path d="M1826 267.800a7.500 7.500 0 0 1 0 11.600" fill="none" stroke="#5b7e8e" stroke-width="2" stroke-linecap="round" stroke-linejoin="round"/>
<path d="M1810 331.500h4.500l2.500-4h9.500l2.500 4h4.500q3 0 3 3v14.500q0 3-3 3h-23.500q-3 0-3-3v-14.500q0-3 3-3z" fill="none" stroke="#5b7e8e" stroke-width="2" stroke-linecap="round" stroke-linejoin="round"/><circle cx="1821.700" cy="341.700" r="5.500" fill="none" stroke="#5b7e8e" stroke-width="2" stroke-linecap="round" stroke-linejoin="round"/><circle cx="1832" cy="336" r="1" fill="#5b7e8e"/>
<circle cx="1819" cy="402.800" r="11.300" fill="none" stroke="#5b7e8e" stroke-width="2" stroke-linecap="round" stroke-linejoin="round"/><path d="M1814 402.800h10M1819 397.800v10M1827.300 411l8 7.800" fill="none" stroke="#5b7e8e" stroke-width="2" stroke-linecap="round" stroke-linejoin="round"/>
<rect x="1807" y="459.500" width="16.500" height="25" rx="1.500" fill="none" stroke="#5b7e8e" stroke-width="2" stroke-linecap="round" stroke-linejoin="round"/><path d="M1813.500 464h3" fill="none" stroke="#5b7e8e" stroke-width="2" stroke-linecap="round" stroke-linejoin="round"/><path d="M1827.500 484q9-2.500 9-12.500q0-8.500-8-11.500M1827.500 466.500v-7h7" fill="none" stroke="#5b7e8e" stroke-width="2" stroke-linecap="round" stroke-linejoin="round"/>
<rect x="1821" y="525.500" width="16.500" height="25" rx="1.500" fill="none" stroke="#5b7e8e" stroke-width="2" stroke-linecap="round" stroke-linejoin="round"/><path d="M1827.500 530h3" fill="none" stroke="#5b7e8e" stroke-width="2" stroke-linecap="round" stroke-linejoin="round"/><path d="M1816.500 550q-9-2.500-9-12.500q0-8.500 8-11.500M1816.500 532.500v-7h-7" fill="none" stroke="#5b7e8e" stroke-width="2" stroke-linecap="round" stroke-linejoin="round"/>
<path d="M1830.300 595v18.500l-16.500-9.250z" fill="none" stroke="#5b7e8e" stroke-width="2" stroke-linecap="round" stroke-linejoin="round"/>
<circle cx="1822" cy="670" r="10.500" fill="none" stroke="#5b7e8e" stroke-width="2" stroke-linecap="round" stroke-linejoin="round"/>
<rect x="1814" y="728" width="16" height="16" rx="1" fill="none" stroke="#5b7e8e" stroke-width="2" stroke-linecap="round" stroke-linejoin="round"/>
<circle cx="1814.500" cy="802" r="2.600" fill="#5b7e8e"/><circle cx="1822" cy="802" r="2.600" fill="#5b7e8e"/><circle cx="1829.500" cy="802" r="2.600" fill="#5b7e8e"/>
<path d="M1327.800 78.300l7.500 3v6.500q0 6.800-7.500 10.200q-7.500-3.400-7.500-10.200v-6.500z" fill="none" stroke="#605e63" stroke-width="1.700"/><path d="M1322.500 82.500q5 3 5.300 7.500q0.300 4 6.700 2" fill="none" stroke="#605e63" stroke-width="1.600"/>
<path d="M1358 78.500h8.500q1.500 0 1.500 1.500v15.500q0 1.500-1.500 1.500h-12q-1.500 0-1.500-1.500v-12z" fill="#605e63"/><rect x="1359" y="80.800" width="1.500" height="3.200" fill="#fef7ff"/><rect x="1361.800" y="80.800" width="1.500" height="3.200" fill="#fef7ff"/><rect x="1364.600" y="80.800" width="1.500" height="3.200" fill="#fef7ff"/>
<path d="M1677 97.500l-11.500-13.500a16 16 0 0 1 23 0z" fill="#605e63"/>
<path d="M1709.500 79.500v17.500h-18.500z" fill="#605e63"/>
<path d="M1720 80.500q0-1.500 1.500-1.500h1.500v-2h6v2h1.500q1.500 0 1.500 1.500v15.500q0 1.500-1.500 1.500h-9q-1.500 0-1.500-1.500z" fill="#605e63"/>
<rect x="1275.800" y="129.200" width="5.600" height="5.500" rx="1" fill="#9fb3bd"/><rect x="1277" y="133" width="3.200" height="3" fill="#b8c7cf"/>
<rect x="-2.300" y="-2" width="4.600" height="4.600" rx="0.800" fill="#9fb3bd" transform="translate(1291.800 136.800) rotate(40)"/>
<circle cx="1278.700" cy="149.300" r="15.300" fill="#b7c6cd"/><circle cx="1278.700" cy="149.300" r="12.400" fill="#f7f8f8"/>
<path d="M1278.7 139.7L1278.7 138.1" stroke="#d98c5f" stroke-width="0.900"/>
<path d="M1283.5 141.0L1284.3 139.6" stroke="#d98c5f" stroke-width="0.900"/>
<path d="M1287.0 144.5L1288.4 143.7" stroke="#d98c5f" stroke-width="0.900"/>
<path d="M1288.3 149.3L1289.9 149.3" stroke="#d98c5f" stroke-width="0.900"/>
<path d="M1287.0 154.1L1288.4 154.9" stroke="#d98c5f" stroke-width="0.900"/>
<path d="M1283.5 157.6L1284.3 159.0" stroke="#d98c5f" stroke-width="0.900"/>
<path d="M1278.7 158.9L1278.7 160.5" stroke="#d98c5f" stroke-width="0.900"/>
<path d="M1273.9 157.6L1273.1 159.0" stroke="#d98c5f" stroke-width="0.900"/>
<path d="M1270.4 154.1L1269.0 154.9" stroke="#d98c5f" stroke-width="0.900"/>
<path d="M1269.1 149.3L1267.5 149.3" stroke="#d98c5f" stroke-width="0.900"/>
<path d="M1270.4 144.5L1269.0 143.7" stroke="#d98c5f" stroke-width="0.900"/>
<path d="M1273.9 141.0L1273.1 139.6" stroke="#d98c5f" stroke-width="0.900"/>
<path d="M1278.700 150.500v-12.300" stroke="#7a2c1e" stroke-width="1.300"/><circle cx="1278.700" cy="150" r="1.200" fill="#7a2c1e"/></svg>
<div class="r" style="left:0px;top:1010px;width:1920px;height:70px;background:#1c1c1c;"></div>
<div class="r" style="left:0px;top:1009px;width:1920px;height:1px;background:#2e2e2e;"></div>
<div class="r" style="left:1327px;top:1014px;width:60px;height:60px;background:#2d2d2d;border-radius:7px;box-shadow:inset 0 0 0 1px #3a3a3a;"></div>
<div class="r" style="left:1345px;top:1068px;width:24px;height:5px;background:#4cc2ff;border-radius:2.5px;"></div>
<div class="r" style="left:692.5px;top:1068px;width:9.5px;height:5px;background:#8e8e8e;border-radius:2.5px;"></div>
<div class="r" style="left:1088.5px;top:1068px;width:9.5px;height:5px;background:#8e8e8e;border-radius:2.5px;"></div>
<div class="r" style="left:1154.5px;top:1068px;width:9.5px;height:5px;background:#8e8e8e;border-radius:2.5px;"></div>
<div class="r" style="left:1220.5px;top:1068px;width:9.5px;height:5px;background:#8e8e8e;border-radius:2.5px;"></div>
<div class="r" style="left:1286.5px;top:1068px;width:9.5px;height:5px;background:#8e8e8e;border-radius:2.5px;"></div>
<div class="r" style="left:1418.5px;top:1068px;width:9.5px;height:5px;background:#8e8e8e;border-radius:2.5px;"></div>
<span class="t" style="font-size:18px;color:#ffffff;letter-spacing:-1.605px;left:1614.9px;top:1024.76px;">ENG</span>
<span class="t" style="font-size:18px;color:#ffffff;letter-spacing:-0.4px;left:1622.9px;top:1047.76px;">IN</span>
<span class="t" style="font-size:18px;color:#ffffff;letter-spacing:-0.369px;left:1847.9px;top:1023.06px;">23:56</span>
<span class="t" style="font-size:18px;color:#ffffff;letter-spacing:0.112px;left:1797.9px;top:1046.76px;">06-06-2025</span>
<svg width="1920" height="1080" viewBox="0 0 1920 1080"><defs>
<linearGradient id="gw" x1="0" y1="0" x2="1" y2="1"><stop offset="0" stop-color="#7ad7ff"/><stop offset="1" stop-color="#1596ea"/></linearGradient>
<linearGradient id="gf" x1="0" y1="0" x2="0" y2="1"><stop offset="0" stop-color="#ffd968"/><stop offset="1" stop-color="#f8bb2a"/></linearGradient>
<linearGradient id="gfb" x1="0" y1="0" x2="0" y2="1"><stop offset="0" stop-color="#2496ea"/><stop offset="1" stop-color="#0b5fb3"/></linearGradient>
<linearGradient id="gs" x1="0" y1="0" x2="0" y2="1"><stop offset="0" stop-color="#ffffff"/><stop offset="1" stop-color="#e4e4e4"/></linearGradient>
<linearGradient id="gc1" x1="0" y1="0" x2="0" y2="1"><stop offset="0" stop-color="#1ea0f5"/><stop offset="0.55" stop-color="#55b86a"/><stop offset="1" stop-color="#f5cc0a"/></linearGradient>
<linearGradient id="gc2" x1="0" y1="0" x2="0" y2="1"><stop offset="0" stop-color="#b85ae8"/><stop offset="0.55" stop-color="#ee5c98"/><stop offset="1" stop-color="#fda650"/></linearGradient>
<linearGradient id="ge1" x1="0" y1="0" x2="1" y2="1"><stop offset="0" stop-color="#2fc0ea"/><stop offset="0.6" stop-color="#36c3a0"/><stop offset="1" stop-color="#6fd94a"/></linearGradient>
<linearGradient id="ge2" x1="0" y1="0" x2="0" y2="1"><stop offset="0" stop-color="#1f9de0"/><stop offset="1" stop-color="#1163b5"/></linearGradient>
<radialGradient id="gsr" cx="0.45" cy="0.4" r="0.6"><stop offset="0" stop-color="#5a5a5a"/><stop offset="1" stop-color="#3a3a3a"/></radialGradient>
<linearGradient id="gm" x1="0" y1="0" x2="1" y2="1"><stop offset="0" stop-color="#ffd75e"/><stop offset="1" stop-color="#f08a1c"/></linearGradient>
<linearGradient id="gcl" x1="0" y1="0" x2="0" y2="1"><stop offset="0" stop-color="#a8c8f8"/><stop offset="1" stop-color="#dfeaf8"/></linearGradient>
</defs>
<path d="M33 1041q14 6 22-3q6 2 7 9q-2 9-12 11.500q-12 1-17-17.500z" fill="url(#gm)"/>
<g fill="url(#gcl)"><rect x="30" y="1032.70" width="19.5" height="6.70" rx="3.35"/><circle cx="38.19" cy="1031.63" r="5.63"/><circle cx="43.65" cy="1034.04" r="4.02"/></g>
<g fill="url(#gcl)"><rect x="45" y="1051.10" width="21" height="6.40" rx="3.20"/><circle cx="53.82" cy="1050.08" r="5.38"/><circle cx="59.70" cy="1052.38" r="3.84"/></g>
<circle cx="58.500" cy="1030" r="11.800" fill="#ff99a4"/>
<rect x="480" y="1027" width="17" height="17" rx="1.200" fill="url(#gw)"/>
<rect x="498" y="1027" width="17" height="17" rx="1.200" fill="url(#gw)"/>
<rect x="480" y="1045" width="17" height="17" rx="1.200" fill="url(#gw)"/>
<rect x="498" y="1045" width="17" height="17" rx="1.200" fill="url(#gw)"/>
<circle cx="563.500" cy="1041.500" r="11.300" fill="#4a4a4a" stroke="#f0f0f0" stroke-width="3.200"/><path d="M572.500 1050.500l7.500 7.500" stroke="#e8e8e8" stroke-width="3.600" stroke-linecap="round"/>
<rect x="613" y="1036" width="27" height="24.500" rx="2.500" fill="#7d7d7d"/><rect x="622" y="1027" width="27" height="24.500" rx="2.500" fill="#f2f2f2"/><path d="M622 1036h18v15.500h-15.500q-2.500 0-2.500-2.500z" fill="#bdbdbd"/>
<path d="M679 1030q0-2 2-2h10.500l3 3.500h18.500q2 0 2 2v25q0 2-2 2h-32q-2 0-2-2z" fill="#e3a511"/><path d="M679 1036.500q0-2 2-2h11l3-3h18q2 0 2 2v25q0 2-2 2h-32q-2 0-2-2z" fill="url(#gf)"/>
<path d="M685 1060.500v-7q0-3.500 3.500-3.500h17q3.500 0 3.500 3.500v7z" fill="url(#gfb)"/><rect x="690" y="1054.300" width="14" height="1.800" rx="0.900" fill="#0a4f98"/>
<path d="M757 1029h11.600l-5.800 10z" fill="#188038"/><path d="M757 1029l5.800 10l-11 19l-5.500-9.600z" fill="#2da94f"/><path d="M768.600 1029l11 19.200h-11.600l-5.200-9.200z" fill="#fbbc04"/><path d="M751.800 1058l5.600-9.800h22.200l-5.500 9.800z" fill="#4285f4"/><path d="M746.300 1048.200h11.100l-5.600 9.800z" fill="#1a66d0"/><path d="M768 1048.200h11.600l-5.500 9.800z" fill="#ea4335"/>
<path d="M831 1030.500h4.500q1.500 0 2.200 2l0.800 2q0.800 2 2.500 2h-13z" fill="#1556d8" stroke="#1556d8" stroke-width="1.500" stroke-linejoin="round"/>
<path d="M821.500 1051.500h6l-2.500 6h-1.200q-1.300-0.300-1.800-2z" fill="#f2602a" stroke="#f2602a" stroke-width="1.500" stroke-linejoin="round"/>
<path d="M819.500 1031h11l-6.500 18h-8.500q-2-0.500-1.500-3l3.500-12.500q0.700-2 2-2.500z" fill="url(#gc1)" stroke="url(#gc1)" stroke-width="3" stroke-linejoin="round"/>
<path d="M835.500 1039h7q1 0.800 0.500 3l-3.500 12q-0.800 2.500-3 3h-9z" fill="url(#gc2)" stroke="url(#gc2)" stroke-width="3" stroke-linejoin="round"/>
<path d="M886 1034v-4.500q0-1.700 1.700-1.700h14.600q1.700 0 1.700 1.700v4.500" fill="none" stroke="#27b3f0" stroke-width="2"/><path d="M877 1033.500q0-2.500 2.500-2.500h30.500q2.500 0 2.500 2.500v22.500q0 6-6 6h-23.500q-6 0-6-6z" fill="url(#gs)"/>
<rect x="887" y="1039" width="7" height="7" fill="#f25022"/><rect x="895.200" y="1039" width="7" height="7" fill="#7fba00"/><rect x="887" y="1047.200" width="7" height="7" fill="#00a4ef"/><rect x="895.200" y="1047.200" width="7" height="7" fill="#ffb900"/>
<circle cx="961" cy="1043.700" r="18.200" fill="#d6008d"/><rect x="952" y="1041" width="18" height="12" rx="1.800" fill="#fff"/><path d="M952 1037.500l17-3.800l0.800 3.300l-17 3.800z" fill="#fff"/><path d="M955.800 1036.200l1.500 3.200M960.800 1035.100l1.500 3.200M965.800 1034l1.500 3.200" stroke="#d6008d" stroke-width="1.500"/><path d="M959 1043.600l5.600 3.400l-5.600 3.400z" fill="#d6008d"/>
<circle cx="1027" cy="1043.500" r="16.500" fill="#1d1b1e" stroke="#dcdcdc" stroke-width="1.400"/><circle cx="1027" cy="1043.500" r="13.800" fill="#262428"/>
<g fill="none" stroke="#cfcfcf" stroke-width="1.700" stroke-linecap="round"><path d="M1021.500 1031.500q-2 8 5.500 12"/><path d="M1040.500 1044.500q-6-6.500-13.500-1"/><path d="M1019.500 1054.500q8 1.500 7.500-11"/></g>
<circle cx="1093" cy="1044" r="18.200" fill="url(#ge2)"/><path d="M1075.300 1040q2-14.200 17.700-14.200q14 0 17.800 12.200q1.500 9-8 9.500q-4.500 0-5.300-2.500q2-2 1.500-5q-1.500-5.500-8.500-5.500q-9 0-15.200 5.500z" fill="url(#ge1)"/><path d="M1086 1045q0-6 6-8q-7-1-11 4q-4 7 1 14q6 7 15 6q-11-3-11-16z" fill="#0f56a3" opacity="0.900"/><path d="M1090 1042q3-4 7-2.500q3.500 1.500 2 5.500q-1 2.500 3.500 3q5 0 8-4q-1 10-10 12q-11 0-10.500-14z" fill="#1c1c1c" opacity="0"/>
<path d="M1097.500 1045q1.500-3-1-5q-3-2-6.500 1q-3 3-2 8q2 6 9 7.500q7 0.500 12-5.500q1-1.500-0.500-2q-3 1.800-7 1.200q-5-1-4-5.200z" fill="#1c1c1c"/>
<polygon points="1176.90,1043.50 1176.58,1044.49 1175.79,1045.39 1174.96,1046.21 1174.50,1047.04 1174.56,1047.98 1174.95,1049.08 1175.27,1050.24 1175.13,1051.27 1174.41,1052.02 1173.31,1052.49 1172.21,1052.87 1171.43,1053.41 1171.07,1054.29 1170.95,1055.45 1170.73,1056.63 1170.16,1057.49 1169.19,1057.86 1167.99,1057.81 1166.83,1057.67 1165.90,1057.83 1165.20,1058.46 1164.58,1059.45 1163.87,1060.42 1162.98,1060.95 1161.95,1060.86 1160.89,1060.29 1159.91,1059.67 1159.00,1059.40 1158.09,1059.67 1157.11,1060.29 1156.05,1060.86 1155.02,1060.95 1154.13,1060.42 1153.42,1059.45 1152.80,1058.46 1152.10,1057.83 1151.17,1057.67 1150.01,1057.81 1148.81,1057.86 1147.84,1057.49 1147.27,1056.63 1147.05,1055.45 1146.93,1054.29 1146.57,1053.41 1145.79,1052.87 1144.69,1052.49 1143.59,1052.02 1142.87,1051.27 1142.73,1050.24 1143.05,1049.08 1143.44,1047.98 1143.50,1047.04 1143.04,1046.21 1142.21,1045.39 1141.42,1044.49 1141.10,1043.50 1141.42,1042.51 1142.21,1041.61 1143.04,1040.79 1143.50,1039.96 1143.44,1039.02 1143.05,1037.92 1142.73,1036.76 1142.87,1035.73 1143.59,1034.98 1144.69,1034.51 1145.79,1034.13 1146.57,1033.59 1146.93,1032.71 1147.05,1031.55 1147.27,1030.37 1147.84,1029.51 1148.81,1029.14 1150.01,1029.19 1151.17,1029.33 1152.10,1029.17 1152.80,1028.54 1153.42,1027.55 1154.13,1026.58 1155.02,1026.05 1156.05,1026.14 1157.11,1026.71 1158.09,1027.33 1159.00,1027.60 1159.91,1027.33 1160.89,1026.71 1161.95,1026.14 1162.98,1026.05 1163.87,1026.58 1164.58,1027.55 1165.20,1028.54 1165.90,1029.17 1166.83,1029.33 1167.99,1029.19 1169.19,1029.14 1170.16,1029.51 1170.73,1030.37 1170.95,1031.55 1171.07,1032.71 1171.43,1033.59 1172.21,1034.13 1173.31,1034.51 1174.41,1034.98 1175.13,1035.73 1175.27,1036.76 1174.95,1037.92 1174.56,1039.02 1174.50,1039.96 1174.96,1040.79 1175.79,1041.61 1176.58,1042.51" fill="#ffffff"/>
<path d="M1159 1033l-6.800 20.500M1159 1033l6.800 20.500M1154 1047h10" stroke="#3f7fee" stroke-width="2.900" fill="none" stroke-linecap="round"/><path d="M1149 1044.500q10 5.500 20 0" stroke="#3f7fee" stroke-width="2.200" fill="none"/><circle cx="1159" cy="1036.500" r="2.300" fill="#fff" stroke="#33373d" stroke-width="1.300"/><path d="M1164.500 1040.500l4.500-1.500l0.500 5l-3 2z" fill="#3fae57"/>
<circle cx="1225" cy="1043.800" r="18" fill="#ffffff"/>
<g fill="none" stroke-width="5.200"><path d="M1233.500 1036.300a11 11 0 0 0-16.800-0.800" stroke="#ea4335"/><path d="M1216.700 1035.500a11 11 0 0 0-0.300 16.200" stroke="#fbbc04"/><path d="M1216.400 1051.700a11 11 0 0 0 16.200 1.200" stroke="#34a853"/><path d="M1232.600 1052.900a11 11 0 0 0 3.400-9.100" stroke="#4285f4"/></g><rect x="1225" y="1041.300" width="13.300" height="5.200" fill="#4285f4"/>
<rect x="1273" y="1030" width="36" height="27" rx="2" fill="#3e3e3e"/><path d="M1273 1035v-3q0-2 2-2h10v5z" fill="#b4b4b4"/><rect x="1285" y="1030" width="12" height="5" fill="#8e8e8e"/><path d="M1297 1030h10q2 0 2 2v3h-12z" fill="#6e6e6e"/><path d="M1279 1040.500l7.500 5l-7.500 5" fill="none" stroke="#d8d8d8" stroke-width="3" stroke-linecap="round" stroke-linejoin="round"/><rect x="1290" y="1049" width="12" height="3.600" rx="0.700" fill="#e4e4e4"/>
<circle cx="1357" cy="1043.800" r="17.600" fill="#ffffff"/><rect x="1350.700" y="1033.500" width="12.600" height="20.500" rx="1.500" fill="#eaf1ff" stroke="#3d7af0" stroke-width="1.800"/><path d="M1352.500 1037.500q7 0 7 6.500q0 6.500-7 6.500z" fill="#3ddc84"/><path d="M1359 1039l1.500-1M1359 1048.800l1.500 1" stroke="#3ddc84" stroke-width="0.800"/>
<path d="M1430.500 1026l10.500 5v26l-10.500 5l-2-1v-34z" fill="#2aa9f2"/><path d="M1430.500 1026l-22 20l-3-2.300q-1.200-1.200 0-2.400l2.300-2q1-0.800 2.200 0l20.500 15.700z" fill="#0a7cc8" opacity="0"/><path d="M1405.500 1041.300l2.500-2.200q1-0.800 2.200 0l20.300 15.400v7.500z" fill="#0b84d6"/><path d="M1405.500 1046.700l2.500 2.200q1 0.800 2.200 0l20.300-15.400v-7.500z" fill="#0a6db8"/><path d="M1430.500 1026l10.500 5v26l-10.500 5z" fill="#2aa9f2"/><path d="M1430.500 1036.500l-10 7.500l10 7.500z" fill="#1c1c1c"/>
<path d="M1567 1047.700l8-8l8 8" fill="none" stroke="#ffffff" stroke-width="1.700"/>
<g fill="none" stroke="#ffffff" stroke-width="1.700" stroke-linecap="round"><path d="M1678 1041a15.500 15.500 0 0 1 22 0"/><path d="M1681.500 1044.800a10.500 10.500 0 0 1 15 0"/><path d="M1685 1048.300a5.500 5.500 0 0 1 8 0"/></g><circle cx="1689" cy="1051" r="1.700" fill="#ffffff"/>
<path d="M1713.500 1040.500h3.500l5-4.500v16l-5-4.500h-3.500z" fill="none" stroke="#ffffff" stroke-width="1.600" stroke-linejoin="round"/><path d="M1725 1040.800a4.500 4.500 0 0 1 0 6.400" fill="none" stroke="#ffffff" stroke-width="1.500"/><path d="M1728.300 1037.500a9.500 9.500 0 0 1 0 13" fill="none" stroke="#7a7a7a" stroke-width="1.400"/><path d="M1731.700 1034.600a14 14 0 0 1 0 18.800" fill="none" stroke="#5e5e5e" stroke-width="1.400"/>
<rect x="1750" y="1037" width="19.500" height="14" rx="3" fill="none" stroke="#ffffff" stroke-width="1.700"/><rect x="1770.300" y="1041" width="2.400" height="6" rx="1" fill="#ffffff"/><path d="M1753.200 1048l3.500-8h9.800q1 0 1 1v6q0 1-1 1z" fill="#ffffff"/><path d="M1757 1031.500l-6 8h4l-2 6l7.500-9h-4.500l2.500-5z" fill="#ffffff" stroke="#1c1c1c" stroke-width="1"/></svg><span class="t" style="font-size:16.5px;color:#000000;left:54px;top:1021.63px;">6</span>
</body></html>
